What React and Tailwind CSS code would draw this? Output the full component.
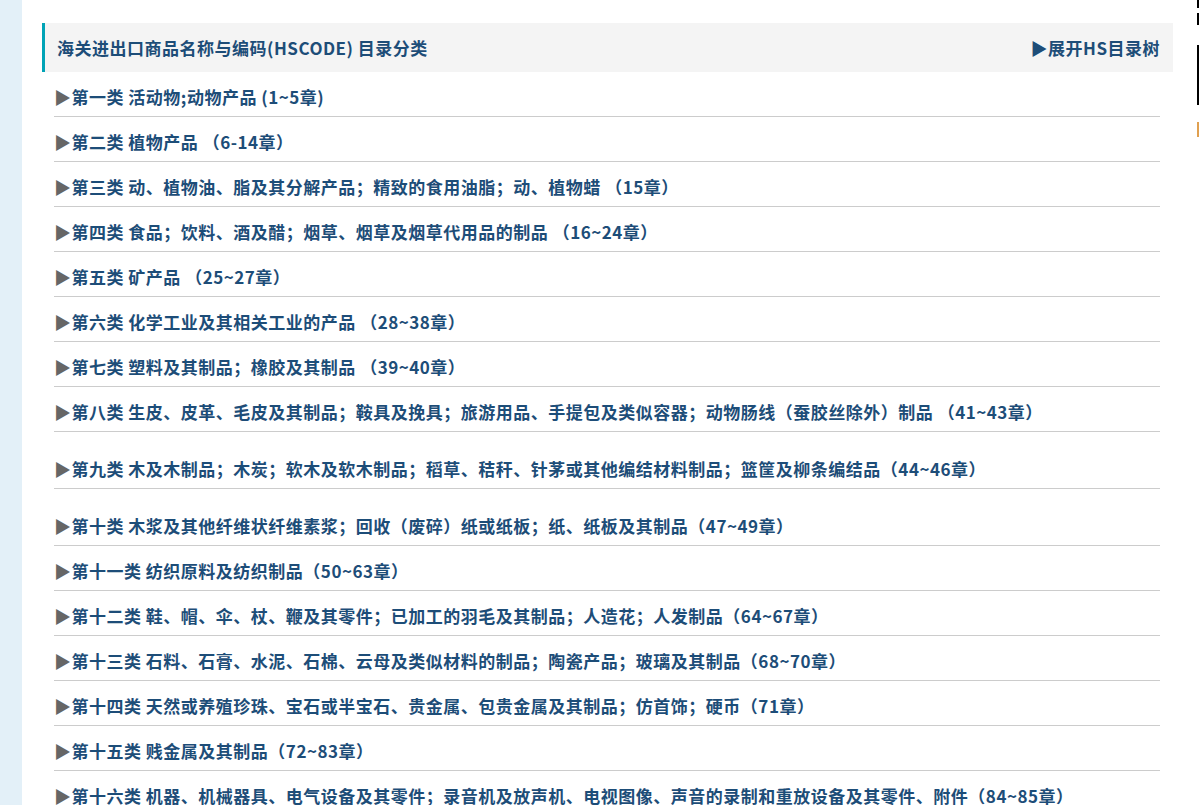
import React from 'react';

const categories = [
  { name: '第一类', desc: '活动物;动物产品 (1~5章)' },
  { name: '第二类', desc: '植物产品 （6-14章）' },
  { name: '第三类', desc: '动、植物油、脂及其分解产品；精致的食用油脂；动、植物蜡 （15章）' },
  { name: '第四类', desc: '食品；饮料、酒及醋；烟草、烟草及烟草代用品的制品 （16~24章）' },
  { name: '第五类', desc: '矿产品 （25~27章）' },
  { name: '第六类', desc: '化学工业及其相关工业的产品 （28~38章）' },
  { name: '第七类', desc: '塑料及其制品；橡胶及其制品 （39~40章）' },
  { name: '第八类', desc: '生皮、皮革、毛皮及其制品；鞍具及挽具；旅游用品、手提包及类似容器；动物肠线（蚕胶丝除外）制品 （41~43章）' },
  { name: '第九类', desc: '木及木制品；木炭；软木及软木制品；稻草、秸秆、针茅或其他编结材料制品；篮筐及柳条编结品（44~46章）', tall: true },
  { name: '第十类', desc: '木浆及其他纤维状纤维素浆；回收（废碎）纸或纸板；纸、纸板及其制品（47~49章）', tall: true },
  { name: '第十一类', desc: '纺织原料及纺织制品（50~63章）' },
  { name: '第十二类', desc: '鞋、帽、伞、杖、鞭及其零件；已加工的羽毛及其制品；人造花；人发制品（64~67章）' },
  { name: '第十三类', desc: '石料、石膏、水泥、石棉、云母及类似材料的制品；陶瓷产品；玻璃及其制品（68~70章）' },
  { name: '第十四类', desc: '天然或养殖珍珠、宝石或半宝石、贵金属、包贵金属及其制品；仿首饰；硬币（71章）' },
  { name: '第十五类', desc: '贱金属及其制品（72~83章）' },
  { name: '第十六类', desc: '机器、机械器具、电气设备及其零件；录音机及放声机、电视图像、声音的录制和重放设备及其零件、附件（84~85章）' },
];

const App = () => {
  return (
    <div
      className="flex h-[805px] w-[1199px] overflow-hidden bg-white"
      style={{ fontFamily: '"Noto Sans CJK SC", "Noto Sans", sans-serif' }}
    >
      {/* 左侧浅蓝条 */}
      <div className="w-[22px] shrink-0 bg-[#e3f0f8]" />

      {/* 主内容 */}
      <div className="w-[1151px] shrink-0 pl-[20px] pt-[23px]">
        <div className="flex h-[49px] items-center justify-between border-l-[3px] border-[#00a3b6] bg-[#f4f4f4] pl-[12px] pr-[13px]">
          <h2 className="text-[17px] font-bold tracking-[0.5px] text-[#1d4d78]">海关进出口商品名称与编码(HSCODE) 目录分类</h2>
          <span className="text-[17px] font-bold tracking-[0.5px] text-[#1d4d78]">▶展开HS目录树</span>
        </div>

        <ul className="ml-[12px] mr-[13px]">
          {categories.map((c) => (
            <li
              key={c.name}
              className={`border-b border-[#cccccc] leading-[24px] ${c.tall ? 'pt-[25px] pb-[7px]' : 'pt-[13px] pb-[7px]'}`}
            >
              <span className="whitespace-nowrap text-[17px] font-bold tracking-[0.5px] text-[#1d4d78]">
                <span className="text-[#666666]">▶</span>
                {c.name} {c.desc}
              </span>
            </li>
          ))}
        </ul>
      </div>

      {/* 右侧被截断的内容 */}
      <div className="ml-auto flex w-[2px] shrink-0 flex-col">
        <div className="h-[8px] bg-black" />
        <div className="h-[5px]" />
        <div className="h-[12px] bg-black" />
        <div className="h-[20px]" />
        <div className="h-[60px] bg-black" />
        <div className="h-[17px]" />
        <div className="h-[15px] bg-[#e0a050]" />
      </div>
    </div>
  );
};

export default App;
